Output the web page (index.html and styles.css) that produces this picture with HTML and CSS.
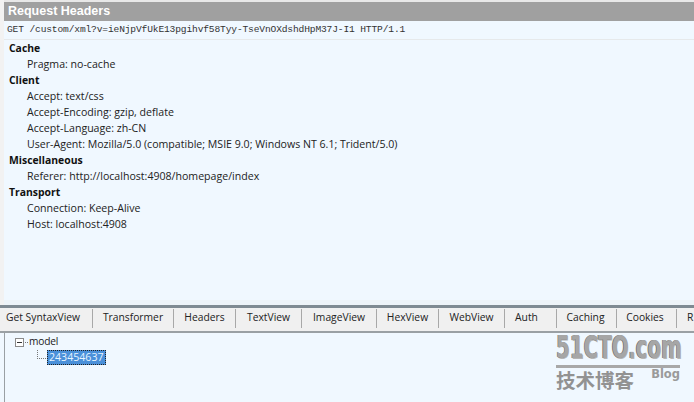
FILE: index.html
```html
<!DOCTYPE html>
<html>
<head>
<meta charset="utf-8">
<title>Request Headers</title>
<link rel="stylesheet" href="styles.css">
</head>
<body>
<div class="app">
  <section class="top">
    <h1 class="title">Request Headers</h1>
    <div class="reqline">GET /custom/xml?v=ieNjpVfUkE13pgihvf58Tyy-TseVnOXdshdHpM37J-I1 HTTP/1.1</div>
    <div class="groups">
      <div class="group">Cache</div>
      <div class="item">Pragma: no-cache</div>
      <div class="group">Client</div>
      <div class="item">Accept: text/css</div>
      <div class="item">Accept-Encoding: gzip, deflate</div>
      <div class="item">Accept-Language: zh-CN</div>
      <div class="item">User-Agent: Mozilla/5.0 (compatible; MSIE 9.0; Windows NT 6.1; Trident/5.0)</div>
      <div class="group">Miscellaneous</div>
      <div class="item">Referer: http://localhost:4908/homepage/index</div>
      <div class="group">Transport</div>
      <div class="item">Connection: Keep-Alive</div>
      <div class="item">Host: localhost:4908</div>
    </div>
  </section>
  <section class="bottom">
    <nav class="tabs">
      <span class="tab t1">Get SyntaxView</span>
      <span class="tab t2">Transformer</span>
      <span class="tab t3">Headers</span>
      <span class="tab t4">TextView</span>
      <span class="tab t5">ImageView</span>
      <span class="tab t6">HexView</span>
      <span class="tab t7">WebView</span>
      <span class="tab t8">Auth</span>
      <span class="tab t9">Caching</span>
      <span class="tab t10">Cookies</span>
      <span class="tab t11">R</span>
    </nav>
    <div class="tree">
      <div class="node">
        <svg class="twisty" width="14" height="15" viewBox="0 0 14 15"><rect x="0.5" y="5.5" width="8" height="8" fill="#fff" stroke="#8a8a8a"/><path d="M2 9.5h5" stroke="#333"/><path d="M10 9.5h1M12 9.5h1" stroke="#777"/></svg>
        <span class="label">model</span>
      </div>
      <div class="node leaf">
        <svg class="elbow" width="10" height="14" viewBox="0 0 10 14"><path d="M0.5 0v1M0.5 2v1M0.5 4v1M0.5 6v1M0.5 8v1M2 8.5h1M4 8.5h1M6 8.5h1M8 8.5h1" stroke="#777"/></svg>
        <span class="selected">243454637</span>
      </div>
      <div class="mark">
        <div class="mark-main"><span class="mark-word">51CTO.com</span></div>
        <div class="mark-sub"><span class="mark-cn">技术博客</span><span class="mark-blog">Blog</span></div>
      </div>
    </div>
  </section>
</div>
</body>
</html>
```

FILE: styles.css
```css
html, body {
  margin: 0;
  padding: 0;
}
body {
  width: 694px;
  height: 402px;
  overflow: hidden;
  background: #f0f8ff;
  font-family: "Open Sans", "Noto Sans", "Liberation Sans", sans-serif;
  color: #1a1a1a;
}
.app {
  display: flex;
  flex-direction: column;
  height: 402px;
}
.top {
  height: 305px;
  padding: 2px 0 0 4px;
  box-sizing: border-box;
  background: #f0f8ff;
  box-shadow: inset 4px 0 0 #f2f2f2, inset 0 2px 0 #e8e8e8, inset 0 -5px 0 #edf3f8;
}
.title {
  margin: 0;
  height: 19px;
  padding-left: 4px;
  background: #a0a0a0;
  color: #fff;
  font: bold 12.5px/19px "Liberation Sans", sans-serif;
}
.reqline {
  height: 18px;
  line-height: 17px;
  padding-left: 3px;
  background: #f0f8ff;
  border-bottom: 1px solid #e6e9eb;
  font-family: "Liberation Mono", monospace;
  font-size: 9.6px;
  letter-spacing: -0.15px;
  color: #333;
  white-space: nowrap;
}
.groups {
  padding: 0 0 0 5px;
  line-height: 16px;
}
.group {
  height: 16px;
  font-size: 10.4px;
  font-weight: 700;
  color: #111;
}
.item {
  height: 16px;
  padding-left: 18px;
  font-size: 10.6px;
  white-space: nowrap;
  color: #222;
}
.bottom {
  flex: 1;
  display: flex;
  flex-direction: column;
  min-height: 0;
}
.tabs {
  display: flex;
  height: 23px;
  border-top: 3px solid #7f8a92;
  border-bottom: 2px solid #9aa0a4;
  background: #f0f0f0;
  overflow: hidden;
  font: 10.3px/17px "Open Sans", "Noto Sans", sans-serif;
  color: #222;
}
.tab {
  flex: none;
  box-sizing: border-box;
  height: 19px;
  margin-top: 1px;
  text-align: center;
  border-right: 1px solid #a8a8a8;
  white-space: nowrap;
}
.t1 { width: 93px; padding-right: 6px; }
.t2 { width: 81px; }
.t3 { width: 62px; }
.t4 { width: 66px; }
.t5 { width: 75px; }
.t6 { width: 62px; }
.t7 { width: 66px; }
.t8 { width: 52px; padding-right: 8px; }
.t9 { width: 60px; padding-right: 2px; }
.t10 { width: 60px; padding-right: 3px; }
.t11 { width: 17px; border-right: 0; padding-left: 10px; text-align: left; }
.tree {
  flex: 1;
  position: relative;
  margin-left: 4px;
  border-left: 1px solid #9aa0a4;
  padding: 0 0 0 10px;
  font-size: 10.2px;
  color: #1a1a1a;
}
.node {
  display: flex;
  align-items: center;
  height: 15px;
}
.twisty {
  flex: none;
}
.label {
  letter-spacing: -0.2px;
}
.leaf {
  height: 19px;
  padding-left: 22px;
}
.elbow {
  flex: none;
  margin-bottom: 2px;
}
.selected {
  background: #4a90d9;
  color: #e8f4ff;
  font-size: 10.6px;
  outline: 1px dotted #222;
  outline-offset: -1px;
  padding: 0 2px;
  line-height: 15px;
}
.mark {
  position: absolute;
  left: 551px;
  top: 2px;
  width: 124px;
  color: #8c8c8c;
}
.mark-main {
  height: 30px;
  border-bottom: 3px solid #a8a8a8;
}
.mark-word {
  display: block;
  font: bold 32px/24px "DejaVu Sans", sans-serif;
  color: #a6a6a6;
  text-shadow: -1px 0 0 #6f6f6f, 1px 1px 0 #b5b5b5;
  white-space: nowrap;
  transform: scaleX(0.62);
  transform-origin: 0 50%;
}
.mark-sub {
  display: flex;
  justify-content: space-between;
  align-items: flex-start;
}
.mark-cn {
  font: 700 19.5px/24px "Noto Sans CJK SC", sans-serif;
  color: #929292;
}
.mark-blog {
  font: bold 11.5px/13px "DejaVu Sans", sans-serif;
  color: #9a9a9a;
}
```
